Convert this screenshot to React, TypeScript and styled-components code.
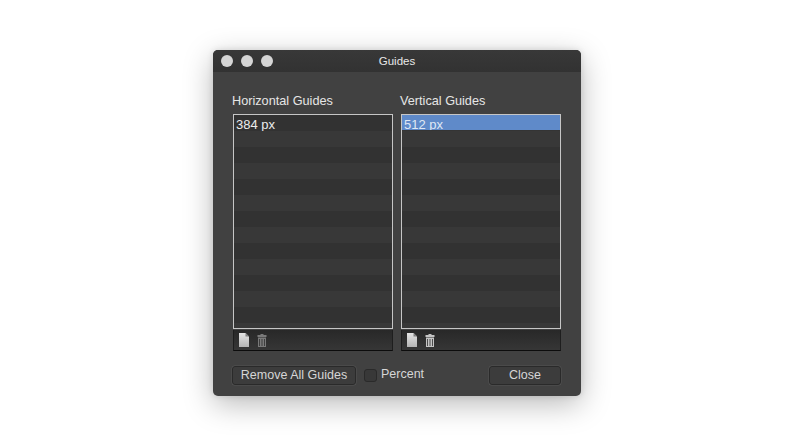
import React from 'react';
import styled, { createGlobalStyle } from 'styled-components';

const GlobalStyle = createGlobalStyle`
  html, body {
    margin: 0;
    padding: 0;
    background: #fff;
    font-family: "Liberation Sans", Arial, sans-serif;
  }
`;

const Page = styled.div`
  width: 800px;
  height: 441px;
  padding: 50px 0 0 213px;
  box-sizing: border-box;
  overflow: hidden;
`;

const Window = styled.div`
  width: 368px;
  height: 346px;
  display: flex;
  flex-direction: column;
  background: #414141;
  border-radius: 5px;
  overflow: hidden;
  box-shadow: 0 8px 30px rgba(0, 0, 0, 0.28), 0 0 6px rgba(0, 0, 0, 0.12);
`;

const TitleBar = styled.div`
  position: relative;
  height: 22px;
  display: flex;
  align-items: center;
  justify-content: center;
  background: linear-gradient(#383838, #323232);
`;

const Lights = styled.div`
  position: absolute;
  left: 8px;
  top: 5px;
  display: flex;
  gap: 8px;
`;

const Light = styled.span`
  width: 12px;
  height: 12px;
  border-radius: 50%;
  background: #d6d6d6;
`;

const Title = styled.div`
  font-size: 11.5px;
  color: #e8e8e8;
`;

const Body = styled.div`
  flex: 1;
  display: flex;
  flex-direction: column;
  padding: 22px 20px 0 19px;
`;

const Columns = styled.div`
  display: flex;
  gap: 7px;
`;

const Column = styled.div`
  width: 160px;
  margin-left: 1px;
`;

const Label = styled.div`
  margin-left: -1px;
  height: 20px;
  line-height: 14px;
  font-size: 12.7px;
  color: #e6e6e6;
`;

const List = styled.div`
  height: 215px;
  box-sizing: border-box;
  border: 1px solid #c6c6c6;
  overflow: hidden;
  background: #343434;
`;

const Row = styled.div<{ $odd: boolean; $selected?: boolean }>`
  height: ${(p) => (p.$selected ? 15 : 16)}px;
  margin-bottom: ${(p) => (p.$selected ? 1 : 0)}px;
  line-height: 19px;
  padding-left: 2px;
  font-size: 13px;
  overflow: hidden;
  color: ${(p) => (p.$selected ? '#dfe7f4' : '#ececec')};
  background: ${(p) =>
    p.$selected ? '#5f8ac9' : p.$odd ? '#383838' : '#323232'};
`;

const ListTools = styled.div`
  height: 21px;
  margin-top: 1px;
  box-sizing: border-box;
  display: flex;
  align-items: center;
  gap: 8px;
  padding-left: 5px;
  background: linear-gradient(#282828, #363636);
  border-bottom: 1px solid #0c0c0c;
  border-left: 1px solid #1e1e1e;
  border-right: 1px solid #1e1e1e;
`;

const Footer = styled.div`
  display: flex;
  align-items: center;
  margin-top: 14px;
  height: 20px;
`;

const Button = styled.div<{ $width: number }>`
  width: ${(p) => p.$width}px;
  height: 19px;
  box-sizing: border-box;
  display: flex;
  align-items: center;
  justify-content: center;
  font-size: 12.5px;
  color: #d6d6d6;
  background: #3c3c3c;
  border: 1px solid #2a2a2a;
  border-radius: 3px;
  box-shadow: 0 0 0 0.5px #555;
`;

const Check = styled.span`
  width: 13px;
  height: 13px;
  margin-left: 8px;
  box-sizing: border-box;
  background: #383838;
  border: 1px solid #2a2a2a;
  border-radius: 3px;
`;

const CheckLabel = styled.span`
  margin-left: 4px;
  font-size: 12.5px;
  color: #d6d6d6;
  flex: 1;
  position: relative;
  top: -1px;
`;

function FileIcon() {
  return (
    <svg width="10" height="14" viewBox="0 0 10 14">
      <defs>
        <linearGradient id="sheet" x1="0" y1="0" x2="0" y2="1">
          <stop offset="0" stopColor="#e4e4e4" />
          <stop offset="1" stopColor="#b4b4b4" />
        </linearGradient>
      </defs>
      <path d="M0 0H6.5L10 3.5V14H0Z" fill="url(#sheet)" />
      <path d="M6.5 0V3.5H10Z" fill="#7e7e7e" />
    </svg>
  );
}

function TrashIcon({ color }: { color: string }) {
  return (
    <svg width="10" height="13" viewBox="0 0 10 13">
      <path d="M3.5 0H6.5V1H9.5V3H0.5V1H3.5Z" fill={color} />
      <path d="M1 3.5H9V13H1Z" fill={color} />
      <path d="M2.5 5V12M5 5V12M7.5 5V12" stroke="#2e2e2e" strokeWidth="0.8" />
    </svg>
  );
}

function GuideList({
  label,
  value,
  selected,
  trash,
}: {
  label: string;
  value: string;
  selected?: boolean;
  trash: string;
}) {
  return (
    <Column>
      <Label>{label}</Label>
      <List>
        {Array.from({ length: 14 }).map((_, i) => (
          <Row key={i} $odd={i % 2 === 1} $selected={selected && i === 0}>
            {i === 0 ? value : ''}
          </Row>
        ))}
      </List>
      <ListTools>
        <FileIcon />
        <TrashIcon color={trash} />
      </ListTools>
    </Column>
  );
}

export default function App() {
  return (
    <Page>
      <GlobalStyle />
      <Window>
        <TitleBar>
          <Lights>
            <Light />
            <Light />
            <Light />
          </Lights>
          <Title>Guides</Title>
        </TitleBar>
        <Body>
          <Columns>
            <GuideList label="Horizontal Guides" value="384 px" trash="#7a7a7a" />
            <GuideList label="Vertical Guides" value="512 px" selected trash="#c4c4c4" />
          </Columns>
          <Footer>
            <Button $width={124}>Remove All Guides</Button>
            <Check />
            <CheckLabel>Percent</CheckLabel>
            <Button $width={72}>Close</Button>
          </Footer>
        </Body>
      </Window>
    </Page>
  );
}
